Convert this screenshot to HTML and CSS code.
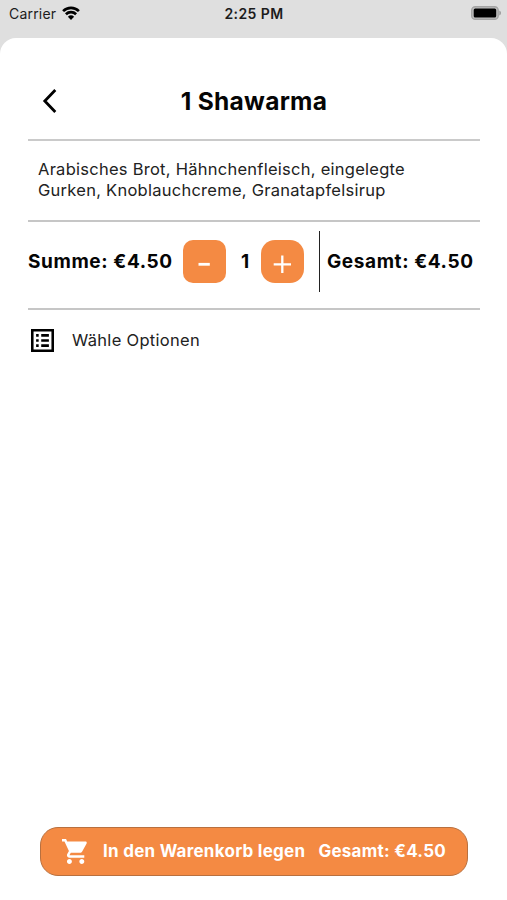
FILE: index.html
```html
<!DOCTYPE html>
<html lang="de">
<head>
    <meta charset="UTF-8">
    <meta name="viewport" content="width=device-width, initial-scale=1.0">
    <title>1 Shawarma</title>
    <link rel="stylesheet" href="styles.css">
</head>
<body>

<div class="status-bar">
    <div class="carrier">
        <span>Carrier</span>
        <svg class="wifi" viewBox="0 0 18 14" width="18" height="14">
            <path d="M1.1 5.1a11.4 11.4 0 0 1 15.8 0M3.9 8.2a7.4 7.4 0 0 1 10.2 0" fill="none" stroke="#000" stroke-width="2.7"/>
            <path d="M9 14 5.9 10.8a4.5 4.5 0 0 1 6.2 0z"/>
        </svg>
    </div>
    <div class="time">2:25 PM</div>
    <svg class="battery" viewBox="0 0 30 14" width="30" height="14">
        <rect x=".7" y=".7" width="26.5" height="12.6" rx="3.6" fill="#c0c0c0" stroke="#a4a4a4" stroke-width="1.4"/>
        <rect x="2.7" y="2.4" width="22.5" height="9.2" rx="1.5"/>
        <path d="M28.3 4.6c2.2.8 2.2 4 0 4.8z" fill="#999"/>
    </svg>
</div>

<div class="sheet">
    <div class="header">
        <svg class="back" viewBox="0 0 16 26" width="16" height="26">
            <path d="M13.3 2 2.8 13l10.5 11" fill="none" stroke="#000" stroke-width="2.8"/>
        </svg>
        <h1>1 Shawarma</h1>
    </div>

    <p class="description">Arabisches Brot, Hähnchenfleisch, eingelegte<br>Gurken, Knoblauchcreme, Granatapfelsirup</p>

    <div class="amount">
        <span class="sum">Summe: €4.50</span>
        <button class="minus"><svg viewBox="0 0 43 43" width="43" height="43"><path d="M15.5 24.3h11.3" stroke="#fff" stroke-width="2.8"/></svg></button>
        <span class="count">1</span>
        <button class="plus"><svg viewBox="0 0 43 43" width="43" height="43"><path d="M12.7 24.3h17.3M21.3 15.6v17.5" stroke="#fff" stroke-width="2.3"/></svg></button>
        <span class="total">Gesamt: €4.50</span>
    </div>

    <div class="options">
        <svg viewBox="3 3 18 18" width="23" height="23">
            <path d="M19 5v14H5V5h14m2-2H3v18h18V3zM11 7h6v2h-6V7zm0 4h6v2h-6v-2zm0 4h6v2h-6v-2zM7 7h2v2H7V7zm0 4h2v2H7v-2zm0 4h2v2H7v-2z"/>
        </svg>
        <span>Wähle Optionen</span>
    </div>

    <button class="cart">
        <svg viewBox="1 2 21 20" width="26" height="25">
            <path fill="#fff" d="M7 18c-1.1 0-1.99.9-1.99 2S5.9 22 7 22s2-.9 2-2-.9-2-2-2zM1 2v2h2l3.6 7.59-1.35 2.45c-.16.28-.25.61-.25.96 0 1.1.9 2 2 2h12v-2H7.42c-.14 0-.25-.11-.25-.25l.03-.12.9-1.63h7.45c.75 0 1.41-.41 1.75-1.03l3.58-6.49c.08-.14.12-.31.12-.48 0-.55-.45-1-1-1H5.21l-.94-2H1zm16 16c-1.1 0-1.99.9-1.99 2s.89 2 1.99 2 2-.9 2-2-.9-2-2-2z"/>
        </svg>
        <span class="add">In den Warenkorb legen</span>
        <span class="price">Gesamt: €4.50</span>
    </button>
</div>

</body>
</html>
```

FILE: styles.css
```css
* {
    box-sizing: border-box;
}

body {
    margin: 0;
    height: 900px;
    display: flex;
    flex-direction: column;
    overflow: hidden;
    background: #dfdfdf;
    color: #050505;
    font-family: Inter, "Liberation Sans", sans-serif;
}

.status-bar {
    height: 37.5px;
    padding: 6px 6px 0 9px;
    display: grid;
    grid-template-columns: 1fr auto 1fr;
    align-items: start;
    font-size: 14px;
    line-height: 16px;
    color: #1c1c1c;
}

.carrier {
    display: flex;
    gap: 6px;
    letter-spacing: 0.2px;
}

.time {
    margin-right: 2px;
    font-weight: 600;
    letter-spacing: 0.4px;
}

.battery {
    justify-self: end;
}

.sheet {
    flex: 1;
    display: flex;
    flex-direction: column;
    padding: 0 27px 24px 28px;
    background: #fff;
    border-radius: 16px 16px 0 0;
}

.header {
    height: 103.5px;
    padding: 26px 14px 0;
    display: grid;
    grid-template-columns: 16px 1fr 16px;
    align-items: center;
    border-bottom: 2px solid #cacaca;
}

h1 {
    margin: 0;
    text-align: center;
    font-size: 24.5px;
    font-weight: 700;
    letter-spacing: 0.3px;
}

.description {
    margin: 0;
    height: 81px;
    padding: 18px 10px 0;
    border-bottom: 2px solid #c6c6c6;
    font-size: 16.5px;
    line-height: 21px;
    letter-spacing: 0.26px;
    color: #222;
}

.amount {
    height: 88px;
    padding-bottom: 8px;
    display: flex;
    align-items: center;
    border-bottom: 2px solid #c6c6c6;
    font-size: 19px;
    font-weight: 700;
    letter-spacing: 0.6px;
    white-space: nowrap;
}

.sum {
    width: 155px;
}

.minus,
.plus {
    width: 43px;
    height: 43px;
    padding: 0;
    border: none;
    border-radius: 10px;
    background: #f48a43;
}

.minus svg,
.plus svg {
    display: block;
}

.plus {
    border-radius: 14px;
}

.count {
    width: 35px;
    padding-left: 4px;
    text-align: center;
}

.total {
    height: 61px;
    margin-left: 15px;
    padding-left: 7px;
    border-left: 1.5px solid #222;
    line-height: 61px;
}

.options {
    padding: 19px 3px 0;
    display: flex;
    align-items: center;
    gap: 18px;
    font-size: 16.5px;
    letter-spacing: 0.3px;
    color: #222;
}

.options span {
    padding-bottom: 1px;
}

.cart {
    height: 49px;
    margin: auto 12px 0;
    padding: 0 21px 0 21px;
    display: flex;
    align-items: center;
    border: 1px solid #b8703f;
    border-radius: 18px;
    background: #f48a43;
    color: #fff;
    font-family: inherit;
    font-size: 17px;
    font-weight: 700;
    letter-spacing: 0.26px;
    white-space: nowrap;
}

.cart span {
    padding-bottom: 1px;
}

.add {
    margin-left: 15px;
}

.price {
    margin-left: auto;
}
```
